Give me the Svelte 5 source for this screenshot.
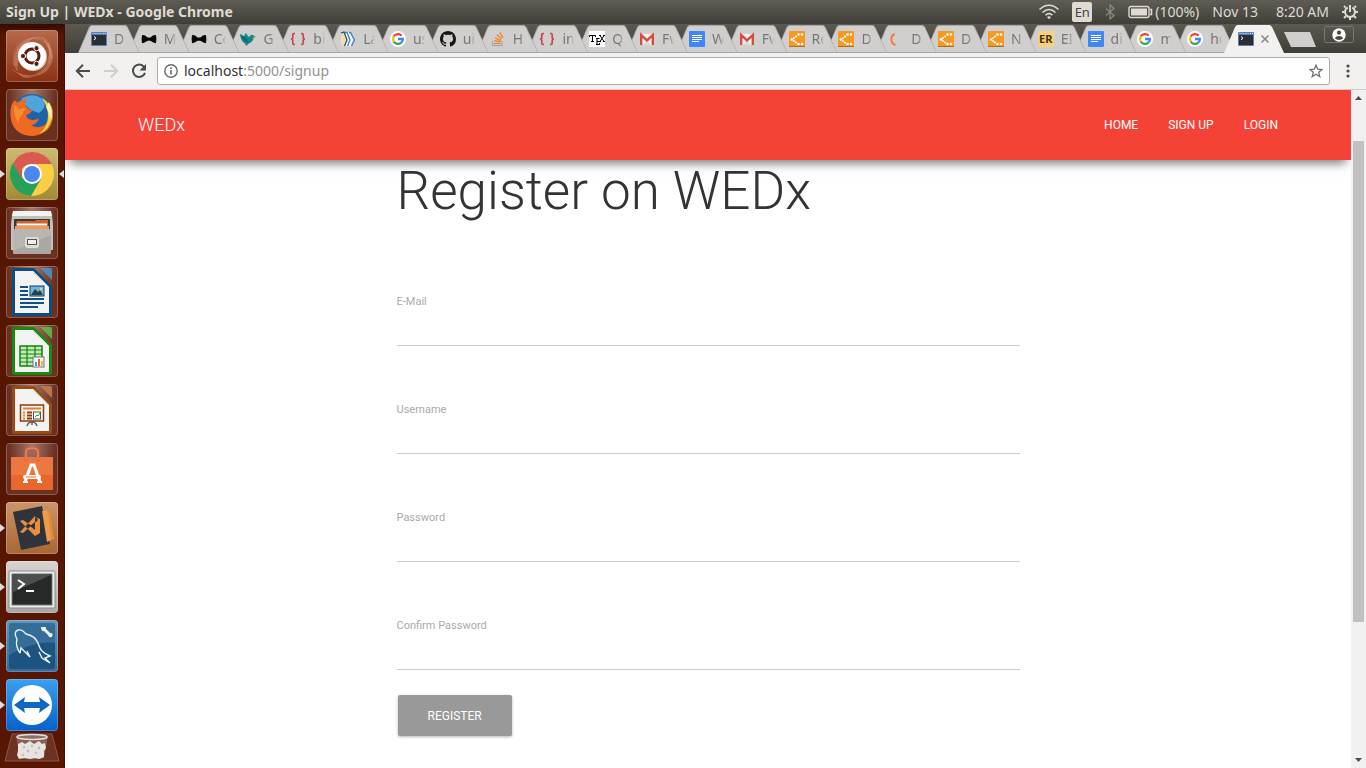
<script>
  const tabs = [
    { icon: 'term', label: 'D' },
    { icon: 'bow', label: 'M' },
    { icon: 'bow', label: 'Co' },
    { icon: 'bird', label: 'Go' },
    { icon: 'braces', label: 'bi' },
    { icon: 'books', label: 'La' },
    { icon: 'google', label: 'us' },
    { icon: 'github', label: 'ui' },
    { icon: 'stack', label: 'H' },
    { icon: 'braces', label: 'in' },
    { icon: 'tex', label: 'Q' },
    { icon: 'gmail', label: 'Fw' },
    { icon: 'docs', label: 'W' },
    { icon: 'gmail', label: 'Fw' },
    { icon: 'graph', label: 'Re' },
    { icon: 'graph', label: 'D' },
    { icon: 'spinner', label: 'D' },
    { icon: 'graph', label: 'D' },
    { icon: 'graph', label: 'N' },
    { icon: 'er', label: 'EI' },
    { icon: 'docs', label: 'di' },
    { icon: 'google', label: 'm' },
    { icon: 'google', label: 'ho' }
  ];

  const apps = [
    { id: 'ubuntu', name: 'Search your computer' },
    { id: 'firefox', name: 'Firefox' },
    { id: 'chrome', name: 'Google Chrome', running: true, focused: true },
    { id: 'files', name: 'Files' },
    { id: 'writer', name: 'LibreOffice Writer' },
    { id: 'calc', name: 'LibreOffice Calc' },
    { id: 'impress', name: 'LibreOffice Impress' },
    { id: 'software', name: 'Ubuntu Software' },
    { id: 'code', name: 'Visual Studio Code', running: true },
    { id: 'terminal', name: 'Terminal', running: true },
    { id: 'mysql', name: 'MySQL Workbench', running: true },
    { id: 'teamviewer', name: 'TeamViewer', running: true }
  ];

  const fields = [
    { id: 'email', label: 'E-Mail', type: 'email' },
    { id: 'username', label: 'Username', type: 'text' },
    { id: 'password', label: 'Password', type: 'password' },
    { id: 'confirm', label: 'Confirm Password', type: 'password' }
  ];
</script>

{#snippet favicon(name)}
  <svg class="fav" viewBox="0 0 16 16" aria-hidden="true">
    {#if name === 'term'}
      <rect x="0" y="1" width="16" height="14" rx="1" fill="#5b7fb5" />
      <rect x="1" y="4" width="14" height="10" fill="#2b2f33" />
      <path d="M1 2.5h10" stroke="#86a9dd" />
      <path d="M12 2.5h3" stroke="#dfe9f7" stroke-dasharray="1 1" />
      <path d="M3 5.5l2 1.7-2 1.7" fill="none" stroke="#fff" />
    {:else if name === 'bow'}
      <path d="M1 4.2Q3.5 3.6 6.6 6.5h2.8Q12.5 3.6 15 4.2q.8 3.8 0 8Q12.500 12 9.400 9.800H6.600Q3.500 12 1 12.200q-.8-4 0-8z" fill="#080808" />
    {:else if name === 'bird'}
      <path d="M0 3l4 2.500L5.500 2 9 6l2-2q2-1 3 1l2 .8-2.500 1Q13 11 9 12.500L6 15l-1-2.500Q1 11 0 3z" fill="#16878a" />
      <path d="M0 3l5 3 4 4-2 2-4-3z" fill="#0b6c78" />
      <path d="M13.500 5.200l2.500.8-2.500.8z" fill="#d7a13c" />
    {:else if name === 'braces'}
      <path d="M5 2.500H4Q2.800 2.500 2.800 4v2.200Q2.800 8 1 8q1.800 0 1.800 1.800V12q0 1.500 1.200 1.500h1M11 2.500h1q1.200 0 1.200 1.500v2.200Q13.200 8 15 8q-1.800 0-1.800 1.800V12q0 1.500-1.200 1.500h-1" fill="none" stroke="#c9464e" stroke-width="1.700" />
    {:else if name === 'books'}
      <path d="M1 2.500l4 1.500 1 6-2 5-3-1.500z" fill="#f1dfae" />
      <path d="M5 1.500l3.500 7L6 15M8 1.500l3.500 7L9 15" fill="none" stroke="#f4f8fc" stroke-width="3" />
      <path d="M1 2l3-1 3 8-2.500 6" fill="none" stroke="#24466f" stroke-width="1.200" />
      <path d="M5 1.500h2l3 7.500-2.500 6M9 1.500h1.500l4 7.500-3 6" fill="none" stroke="#3c82cc" stroke-width="1.300" />
    {:else if name === 'google'}
      <circle cx="8" cy="8" r="8" fill="#fff" />
      <g fill="none" stroke-width="2.300">
        <path d="M3.700 5.500A5 5 0 0 1 11.600 4.600" stroke="#ea4335" />
        <path d="M3.700 5.500a5 5 0 0 0 0 5" stroke="#fbbc05" />
        <path d="M3.700 10.500A5 5 0 0 0 11.300 11.700" stroke="#34a853" />
        <path d="M11.300 11.700Q13.200 10 12.900 8H8" stroke="#4285f4" />
      </g>
    {:else if name === 'github'}
      <path d="M8 0C3.580 0 0 3.580 0 8c0 3.540 2.290 6.530 5.470 7.590.4.070.55-.17.55-.38 0-.19-.01-.82-.01-1.490-2.010.37-2.530-.49-2.690-.94-.09-.23-.48-.94-.82-1.130-.28-.15-.68-.52-.01-.53.63-.01 1.080.58 1.230.82.720 1.210 1.870.87 2.330.66.070-.52.280-.87.510-1.070-1.780-.2-3.640-.89-3.640-3.950 0-.87.310-1.590.820-2.150-.08-.2-.36-1.020.080-2.120 0 0 .670-.21 2.200.82.640-.18 1.320-.27 2-.27s1.360.090 2 .27c1.530-1.040 2.200-.82 2.200-.82.440 1.100.160 1.920.080 2.120.510.56.820 1.270.820 2.150 0 3.070-1.870 3.750-3.650 3.950.290.25.540.73.540 1.480 0 1.070-.01 1.930-.01 2.200 0 .21.150.46.550.38A8.010 8.010 0 0 0 16 8c0-4.420-3.580-8-8-8z" fill="#171515" />
    {:else if name === 'stack'}
      <path d="M2.500 10v4.500h9.500V10" fill="none" stroke="#a7aaad" stroke-width="1.300" />
      <path d="M4 12.300h6.500M4.200 9.700l6.400 1M5 6.800l6 2.500M6.800 3.800l5 4M9.800 1.300l3.400 5.300" stroke="#f08024" stroke-width="1.300" />
    {:else if name === 'tex'}
      <rect width="16" height="16" fill="#fff" />
      <g fill="none" stroke="#000"><path d="M.5 6V4.500h6V6M3.500 4.500v6M2 10.500h3" /><path d="M7 7.500h3.500M8 7.500v6M7 13.500h3.500V12M8 10.500h2" /><path d="M10 4.500h2M14 4.500h2M11 4.500l4 6M15 4.500l-4 6M10 10.500h2M14 10.500h2" /></g>
    {:else if name === 'gmail'}
      <path d="M1 3h14v11H1z" fill="#f4f2f1" />
      <path d="M4 14l4-5 4 5z" fill="#dcd9d7" />
      <path d="M2.200 14V4L8 9.300 13.800 4v10" fill="none" stroke="#d54b3d" stroke-width="2.400" />
    {:else if name === 'docs'}
      <rect width="16" height="16" rx="1" fill="#4285f4" />
      <path d="M3 4.500h10M3 6.500h10M3 8.500h10M3 10.500h7" stroke="#fff" />
    {:else if name === 'graph'}
      <rect width="16" height="16" rx="1" fill="#f9981e" />
      <path d="M0 15.500h16" stroke="#b06d1c" />
      <g fill="#fff"><circle cx="9.500" cy="3.500" r="1.300" /><circle cx="13" cy="3.500" r="1.300" /><circle cx="7" cy="5.500" r="1.100" /><circle cx="5" cy="7" r="1" /><circle cx="3" cy="8.500" r="1.300" /><circle cx="5" cy="10" r="1" /><circle cx="7" cy="11.500" r="1.100" /><circle cx="9.500" cy="13" r="1.300" /><circle cx="13" cy="13" r="1.300" /></g>
    {:else if name === 'spinner'}
      <path d="M6.500 3A6 6 0 0 0 7.500 14" fill="none" stroke="#f07746" stroke-width="2" />
    {:else if name === 'er'}
      <rect width="16" height="16" fill="#f5d27b" />
      <text x="1" y="12" font-size="11" font-weight="700" font-family="Noto Sans, sans-serif" fill="#4a3218">ER</text>
    {/if}
  </svg>
{/snippet}

{#snippet sheet(edge, light)}
  <path d="M8 2h20l18 18v28q0 2-2 2H8q-2 0-2-2V4q0-2 2-2z" fill={edge} />
  <path d="M9 5h18l16 16v26H9z" fill="#f3f3f3" />
  <path d="M27 5v2l16 14z" fill="#dcdcdc" />
  <path d="M34 2h10q2 0 2 2v10z" fill={light} opacity=".85" />
{/snippet}

{#snippet appicon(id)}
  <svg viewBox="0 0 52 52" aria-hidden="true">
    {#if id === 'ubuntu'}
      <g fill="none" stroke="#e6a78a" stroke-opacity=".35"><path d="M8 36Q5 12 26 8q18 0 20 20M43 12q4 24-14 33Q15 48 6 39M11 20Q22 4 38 8q9 8 5 25" /></g>
      <path d="M8 34Q8 12 28 8 15 15 12 34t18 12Q11 48 8 34zM34 6q14 14 7 29-6 9-15 11 18 0 21-19Q47 14 34 6z" fill="#e8b7a0" opacity=".35" />
      <circle cx="27" cy="27" r="14" fill="#d9c4ba" />
      <circle cx="26" cy="26" r="14" fill="#fff" />
      <circle cx="26" cy="26" r="7" fill="none" stroke="#5a1c0c" stroke-width="3" />
      <g fill="#5a1c0c" stroke="#fff"><circle cx="17" cy="26" r="2.600" /><circle cx="30.500" cy="18.200" r="2.600" /><circle cx="30.500" cy="33.800" r="2.600" /></g>
    {:else if id === 'firefox'}
      <circle cx="26" cy="25" r="20" fill="#1d63a8" />
      <path d="M15 10q12-8 23 1 3 8-5 13-11-2-18-14z" fill="#4ea4dc" />
      <path d="M7 13q3-3 4 1 3-3 10-5-3 5-1 8 2 4 6 4-1 4-6 5 1 5 7 5 3 0 6-2-2 7-8 7 8 5 15-1 6-7 4-20 4 5 3 13-2 17-20 19Q9 47 5 31 3 20 7 13z" fill="#ed6a20" />
      <path d="M36 9q11 6 10 19-2 13-13 17 9-7 9-18 0-9-6-18z" fill="#fbd233" />
      <path d="M8 16q4 1 5 5 4-3 7-1-3 1-3 5-5 3-4 10-6-8-5-19z" fill="#f58d34" />
      <path d="M43 13q5 9 2 19-2-9-5-14z" fill="#fff3a6" />
    {:else if id === 'chrome'}
      <circle cx="26" cy="26" r="22" fill="#fbcf44" />
      <path d="M6.900 15A22 22 0 0 0 25 48L35 31 26 26 17 30z" fill="#26a05a" />
      <path d="M26 4A22 22 0 0 0 7 15l9 16V21q3-5 10-5h20A22 22 0 0 0 26 4z" fill="#d95a50" />
      <circle cx="26" cy="26" r="10" fill="#fff" /><circle cx="26" cy="26" r="8" fill="#4b87ef" />
    {:else if id === 'files'}
      <path d="M8 4h36q2 0 3 14v25H5V18Q6 4 8 4z" fill="#c3c1bd" />
      <path d="M7 4h38l1 5H6z" fill="#f3f2f0" />
      <path d="M8 12h36v11H8z" fill="#3c3833" />
      <path d="M10 16l1-2h18l1-1h12v10H10z" fill="#c8642d" />
      <path d="M11 17.500h30" stroke="#fff" stroke-width="2" /><path d="M9 19h34v3H9z" fill="#f29a55" />
      <path d="M7 22h38v24q0 1-1 1H8q-1 0-1-1z" fill="#aaa8a5" /><path d="M7 22h38v6L7 44z" fill="#c5c3c0" opacity=".5" />
      <rect x="19" y="30" width="14" height="11" rx="3" fill="#ddd" /><rect x="21.500" y="32.500" width="9" height="5" fill="#eee" stroke="#555" />
    {:else if id === 'writer'}
      {@render sheet('#0b4d82', '#4696cb')}
      <path d="M14 21h8M14 25h8M14 29h8M14 33h24M14 37h24M14 41h18" stroke="#0d5287" stroke-width="2" />
      <rect x="24" y="20" width="14" height="10" fill="#6db6e4" stroke="#0d4168" /><path d="M25 29l4-6 3 3 2-2 3 5z" fill="#2d3d40" /><circle cx="35" cy="23" r="1.200" fill="#fbd94b" />
    {:else if id === 'calc'}
      {@render sheet('#188a0c', '#5cc044')}
      <path d="M14 21h22v20H14z" fill="#c4ecb9" stroke="#13800a" stroke-width="1.500" /><path d="M14 25h22M14 29h22M14 33h22M14 37h22M21 21v20M29 21v20" stroke="#13800a" stroke-width="1.200" />
      <rect x="27" y="32" width="11" height="10" fill="#f5f5f5" stroke="#777" /><path d="M30 41v-4" stroke="#34a0df" stroke-width="2" /><path d="M33 41v-7" stroke="#e5652d" stroke-width="2" /><path d="M36 41v-5" stroke="#f1bd35" stroke-width="2" />
    {:else if id === 'impress'}
      {@render sheet('#9b4a16', '#c87d4d')}
      <path d="M26 37v4M21 42q1-4 5-4t5 4" fill="none" stroke="#666" stroke-width="1.500" />
      <rect x="14.500" y="21" width="23" height="16" fill="#fff5ea" stroke="#8c3d0e" stroke-width="1.500" /><path d="M17 24.500h18" stroke="#e27b3e" stroke-width="2" />
      <path d="M17 28.500h2M17 31.500h2M17 34.500h2" stroke="#e27b3e" stroke-width="2" /><path d="M21 28.500h5M21 31.500h5M21 34.500h5" stroke="#8c3d0e" stroke-width="2" />
      <rect x="27.500" y="28" width="7" height="7" fill="#fff" stroke="#555" /><path d="M29 33l2-2 1 1 2-3" fill="none" stroke="#35a12b" />
    {:else if id === 'software'}
      <path d="M5 14h42v33H5z" fill="#e9662c" /><path d="M5 14h42v18H5z" fill="#f18a52" opacity=".5" />
      <path d="M20 18V9q0-4 6-4t6 4v9" fill="none" stroke="#d8623a" stroke-width="3" /><path d="M20 17V9q0-4 6-4t6 4v8" fill="none" stroke="#f0936a" />
      <path d="M19 39l6-17h3l6 17" fill="none" stroke="#fff" stroke-width="3" /><path d="M17 39h5M31 39h5" stroke="#fff" stroke-width="2" /><rect x="17" y="32" width="18" height="4" rx="2" fill="#fff" /><path d="M20 34h10" stroke="#e9662c" />
    {:else if id === 'code'}
      <path d="M35 8l9 1 4 28-7 3z" fill="#e7893b" /><path d="M35 8l6 1 3 30-5 1z" fill="#f5a554" /><path d="M7 10l29-6 8 38-29 6z" fill="#30343a" /><path d="M36 9l6 1 3 28-4 2z" fill="#ee9a4b" />
      <path d="M14 19l3-1 12 8V15l5 2v14l-5 3zM14 30l3 1 15-13-3-4z" fill="#e98e3e" /><path d="M29 20v8l-5-4z" fill="#30343a" />
    {:else if id === 'terminal'}
      <rect x="3" y="10" width="46" height="37" rx="1" fill="#eee" stroke="#8b8885" /><rect x="6" y="13" width="40" height="31" fill="#252927" stroke="#777" />
      <path d="M7 14h38L7 31z" fill="#4b504d" /><path d="M12 19l6 4-6 5M20 30h8" fill="none" stroke="#fff" stroke-width="2" />
    {:else if id === 'mysql'}
      <rect x="3" y="3" width="46" height="46" rx="3" fill="#1d5380" /><path d="M3 3h46v20Q30 20 3 35z" fill="#457fa8" opacity=".6" />
      <path d="M14 33Q9 26 11 19q-4-7 1-9 4-1 8 4 9 2 12 9 2 6 4 8 3 3 8 5l-5 2 5 5-8-5q-2-4-3-6M14 33l1-5 4 4 5 5-3-6" fill="none" stroke="#e7f0f5" stroke-width="1.400" />
      <path d="M37 8l7 7" stroke="#e7f0f5" stroke-width="3" /><path d="M35 7q0 5 4 4l1-4M43 17q5 1 3-4l-4 1" fill="#e7f0f5" />
    {:else if id === 'teamviewer'}
      <circle cx="26" cy="26" r="20" fill="#fff" /><path d="M8 26l11-8-1 5h16l-1-5 11 8-11 8 1-5H18l1 5z" fill="#1167c2" />
    {/if}
  </svg>
{/snippet}

<div class="desktop">
  <header class="panel">
    <h2>Sign Up | WEDx - Google Chrome</h2>
    <div class="status">
      <svg width="20" height="16" viewBox="0 0 20 16" fill="none" stroke="#dfdbd2" stroke-width="1.500" aria-hidden="true"><path d="M0.500 5.500Q10-3 19.500 5.500M3.500 8.500Q10 2.500 16.500 8.500M6.500 11.300Q10 8 13.500 11.300" /><path d="M8 13q2-1.500 4 0l-2 2.300z" fill="#dfdbd2" stroke="none" /></svg>
      <span class="lang">En</span>
      <svg width="10" height="16" viewBox="0 0 10 16" fill="none" stroke="#8c8a83" stroke-width="1.200" aria-hidden="true"><path d="M1 4.500l8 7-4 3.500V1l4 3.500-8 7" /></svg>
      <div class="battery">
        <svg width="25" height="14" viewBox="0 0 25 14" aria-hidden="true"><rect x="1" y="1.500" width="20" height="11" rx="2" fill="none" stroke="#dfdbd2" stroke-width="1.400" /><rect x="3" y="3.500" width="16" height="7" fill="#dfdbd2" /><path d="M22 4.500h1.500v5H22" fill="none" stroke="#dfdbd2" stroke-width="1.500" /></svg>
        <span>(100%)</span>
      </div>
      <span>Nov 13</span>
      <time>8:20 AM</time>
      <svg width="16" height="16" viewBox="0 0 16 16" fill="none" stroke="#dfdbd2" aria-hidden="true"><path d="M5.700 3.500a5 5 0 1 0 4.600 0" stroke-width="2" /><path d="M8 1v7" stroke-width="2" /><path d="M3.500 3.500L2 2M12.500 3.500L14 2M2.500 8H0M13.500 8H16M4 12l-2 2M12 12l2 2M8 13v3" stroke-width="2" /></svg>
    </div>
  </header>

  <div class="body">
    <nav class="launcher" aria-label="Launcher">
      {#each apps as app}
        <button class="tile {app.id}" class:running={app.running} class:focused={app.focused} aria-label={app.name}>{@render appicon(app.id)}</button>
      {/each}
      <button class="trash" aria-label="Trash">
        <svg viewBox="0 0 56 30" aria-hidden="true">
          <path d="M8 1h40l7 27H1z" fill="#6d3221" stroke="#8f5541" />
          <path d="M12 3h32l-4 22q-12 3-24 0z" fill="#8d6c60" opacity=".8" />
          <ellipse cx="28" cy="4" rx="15" ry="2.500" fill="#8b7065" stroke="#e4dedb" stroke-width="1.500" />
          <path d="M14 11l4-2 3 2 5-3 4 3 5-3 3 3 3-1 1 5-2 3v6l-5 2-4-1-5 1-5-1-6 1-2-4 1-4z" fill="#e6e3e1" />
          <g fill="#c2bdb9"><circle cx="20" cy="14" r="1.200" /><circle cx="28" cy="13" r="1.200" /><circle cx="35" cy="15" r="1.400" /><circle cx="24" cy="18" r="1.400" /><circle cx="32" cy="20" r="1.200" /><circle cx="19" cy="22" r="1.200" /></g>
        </svg>
      </button>
    </nav>

    <div class="browser">
      <div class="tabstrip">
        <div class="tabs">
          {#each tabs as tab, i}
            <button class="tab" style="z-index: {tabs.length - i}">
              {@render favicon(tab.icon)}<span class="tabtext">{tab.label}</span>
            </button>
          {/each}
          <div class="tab active">
            {@render favicon('term')}
            <button class="close" aria-label="Close tab"><svg width="8" height="8" viewBox="0 0 8 8" aria-hidden="true"><path d="M.5.5l7 7M7.500.5l-7 7" stroke="#858585" stroke-width="1.500" /></svg></button>
          </div>
        </div>
        <button class="newtab" aria-label="New tab"></button>
        <button class="profile" aria-label="Profile"><svg width="14" height="14" viewBox="0 0 14 14" aria-hidden="true"><circle cx="7" cy="7" r="6.700" fill="#fff" /><circle cx="7" cy="4.700" r="2.100" fill="#4a4943" /><path d="M2.800 10.300Q4 8 7 8t4.200 2.300Q9.500 12 7 12t-4.200-1.700z" fill="#4a4943" /></svg></button>
      </div>

      <div class="toolbar">
        <button aria-label="Back"><svg width="16" height="16" viewBox="0 0 16 16" fill="none" stroke="#4b4b4b" stroke-width="2" aria-hidden="true"><path d="M15 8H2.500M8 1.800L1.800 8 8 14.200" /></svg></button>
        <button aria-label="Forward" disabled><svg width="16" height="16" viewBox="0 0 16 16" fill="none" stroke="#cecdcc" stroke-width="2" aria-hidden="true"><path d="M1 8h12.500M8 1.800L14.200 8 8 14.200" /></svg></button>
        <button aria-label="Reload"><svg width="16" height="16" viewBox="0 0 16 16" aria-hidden="true"><path d="M13 3.800A6.200 6.200 0 1 0 14 9.800" fill="none" stroke="#4b4b4b" stroke-width="2" /><path d="M15 1v6.500H8.500z" fill="#4b4b4b" /></svg></button>
        <div class="omnibox">
          <svg width="14" height="14" viewBox="0 0 14 14" aria-hidden="true"><circle cx="7" cy="7" r="6.200" fill="none" stroke="#6a6a6a" stroke-width="1.400" /><path d="M7 6v4.500M7 3.300v1.600" stroke="#6a6a6a" stroke-width="1.600" /></svg>
          <span class="url">localhost<span>:5000/signup</span></span>
          <button aria-label="Bookmark this page"><svg width="14" height="14" viewBox="0 0 14 14" aria-hidden="true"><path d="M7 1.200l1.700 4 4.300.3-3.300 2.800 1.100 4.300L7 10.300l-3.800 2.300 1.100-4.300L1 5.500l4.300-.3z" fill="none" stroke="#6f6f6f" stroke-width="1.300" /></svg></button>
        </div>
        <button class="menu" aria-label="Menu"><svg width="4" height="14" viewBox="0 0 4 14" fill="#4b4b4b" aria-hidden="true"><circle cx="2" cy="2" r="1.600" /><circle cx="2" cy="7" r="1.600" /><circle cx="2" cy="12" r="1.600" /></svg></button>
      </div>

      <div class="viewport">
        <div class="page">
          <nav class="navbar">
            <div class="container">
              <a class="brand" href="#home">WEDx</a>
              <div class="links">
                <a href="#home">HOME</a>
                <a href="#signup">SIGN UP</a>
                <a href="#login">LOGIN</a>
              </div>
            </div>
          </nav>
          <main>
            <h1>Register on WEDx</h1>
            <form>
              <div class="fields">
                {#each fields as field}
                  <div class="field">
                    <label for={field.id}>{field.label}</label>
                    <input id={field.id} type={field.type} />
                  </div>
                {/each}
              </div>
              <button class="register" type="button">REGISTER</button>
            </form>
          </main>
        </div>
        <div class="scrollbar" aria-hidden="true">
          <svg width="7" height="4" viewBox="0 0 7 4"><path d="M3.500 0L7 4H0z" fill="#4d4d4d" /></svg>
          <div class="track"><div class="thumb"></div></div>
          <svg width="7" height="4" viewBox="0 0 7 4"><path d="M0 0h7L3.500 4z" fill="#4d4d4d" /></svg>
        </div>
      </div>
    </div>
  </div>
</div>

<style>
  :global(body) { margin: 0; }
  * { box-sizing: border-box; }
  button { border: 0; padding: 0; background: none; font: inherit; color: inherit; }
  svg { display: block; flex: none; }

  .desktop {
    display: flex;
    flex-direction: column;
    height: 100vh;
    overflow: hidden;
    font-family: "Noto Sans", sans-serif;
    font-size: 14px;
  }

  .panel {
    display: flex;
    align-items: center;
    justify-content: space-between;
    flex: none;
    height: 24px;
    padding: 0 8px 0 6px;
    background: linear-gradient(#5f5d53, #3f3e39);
    color: #dfdbd2;
    line-height: 24px;
  }
  .panel h2 { margin: 0; font-size: 14px; font-weight: 700; }
  .status { display: flex; align-items: center; gap: 13px; }
  .lang {
    width: 20px;
    height: 20px;
    border-radius: 2px;
    background: #dfdbd2;
    color: #45443f;
    font-size: 13px;
    line-height: 20px;
    text-align: center;
  }
  .battery { display: flex; align-items: center; gap: 2px; }
  time { margin-left: 5px; }

  .body { display: flex; flex: 1; min-height: 0; }

  .launcher {
    display: flex;
    flex-direction: column;
    align-items: center;
    gap: 7px;
    flex: none;
    width: 65px;
    padding: 6px 1px 0 0;
    background: linear-gradient(#350c02, #561602 12px);
    border-right: 1px solid #3f1002;
  }
  .tile {
    position: relative;
    flex: none;
    width: 52px;
    height: 52px;
    border-radius: 4px;
    background: radial-gradient(ellipse at 50% 0, #a3796a, #6a3022 65%);
    box-shadow: inset 0 0 0 1px rgba(255, 255, 255, .22);
  }
  .ubuntu { background: linear-gradient(#b66a4c, #8c3213); }
  .chrome { background: linear-gradient(#cdbb6e, #a18a32); }
  .code { background: linear-gradient(#cc9566, #a86636); }
  .terminal { background: linear-gradient(#d8d4d1, #aaa6a3); }
  .mysql { background: linear-gradient(#6595bb, #376a9c); }
  .teamviewer { background: linear-gradient(#39a0ef, #0760cc); }
  .running::before, .focused::after {
    content: "";
    position: absolute;
    top: 22px;
    border: 4px solid transparent;
  }
  .running::before { left: -6px; border-left: 5px solid #dedbd9; border-right: 0; }
  .focused::after { right: -6px; border-right: 5px solid #dedbd9; border-left: 0; }
  .trash { width: 56px; height: 30px; margin-top: -5px; }

  .browser { display: flex; flex-direction: column; flex: 1; min-width: 0; }
  .tabstrip {
    display: flex;
    flex: none;
    height: 29px;
    padding: 0 12px 0 13px;
    background: linear-gradient(#5b5950, #3f3e39);
  }
  .tabs { display: flex; flex: 1; min-width: 0; padding-top: 1px; isolation: isolate; }
  .tab {
    position: relative;
    display: flex;
    align-items: center;
    flex: 1;
    min-width: 0;
    margin-right: -12px;
    padding-left: 13px;
    gap: 7px;
    color: #777;
  }
  .tab::before, .tab::after {
    content: "";
    position: absolute;
    inset: 0;
    z-index: -1;
    background: #a9a7a5;
    clip-path: polygon(0 100%, 11px 2px, 13px 0, calc(100% - 14px) 0, calc(100% - 12px) 2px, 100% 100%);
  }
  .tab::after {
    background: #d1cfcd;
    clip-path: polygon(1px calc(100% - 1px), 12px 2px, 14px 1px, calc(100% - 15px) 1px, calc(100% - 13px) 2px, calc(100% - 1px) calc(100% - 1px));
  }
  .tab.active { flex: 0 0 60px; margin-right: 0; padding-left: 14px; z-index: 30; }
  .tab.active::before, .tab.active::after { background: #f2f1f0; }
  .fav { width: 16px; height: 16px; }
  .tabtext {
    width: 12px;
    overflow: hidden;
    line-height: 20px;
    text-align: left;
    white-space: nowrap;
    mask-image: linear-gradient(90deg, #000 60%, transparent);
  }
  .newtab {
    width: 32px;
    height: 15px;
    margin-top: 8px;
    background: #d1cfcd;
    clip-path: polygon(0 0, 26px 0, 100% 100%, 7px 100%);
  }
  .profile {
    display: grid;
    place-items: center;
    width: 30px;
    height: 17px;
    margin: 2px 0 0 8px;
    border: 1px solid #77756e;
    border-radius: 2px;
  }

  .toolbar {
    display: flex;
    align-items: center;
    gap: 12px;
    flex: none;
    height: 37px;
    padding: 0 16px 0 10px;
    background: #f2f1f0;
    border-bottom: 1px solid #cfcdcb;
  }
  .omnibox {
    display: flex;
    align-items: center;
    gap: 6px;
    flex: 1;
    height: 28px;
    margin: 0 4px 0 -2px;
    padding: 0 6px;
    border: 1px solid #aeacaa;
    border-radius: 3px;
    background: #fff;
  }
  .url { flex: 1; padding-bottom: 2px; color: #333; }
  .url span { color: #929292; }

  .viewport { display: flex; flex: 1; min-height: 0; background: #fff; }
  .page { flex: 1; min-width: 0; overflow: hidden; font-family: Roboto, sans-serif; }
  .navbar {
    height: 70px;
    background: #f44336;
    box-shadow: 0 8px 10px -5px rgba(0, 0, 0, .55);
  }
  .container {
    display: flex;
    align-items: center;
    justify-content: space-between;
    max-width: 1140px;
    height: 100%;
    margin: 0 auto;
  }
  .container a { color: #fff; text-decoration: none; }
  .brand { padding-bottom: 2px; font-size: 18px; font-weight: 300; }
  .links { display: flex; gap: 30px; font-size: 12px; }

  main { width: 100%; max-width: 623px; margin: 0 auto; }
  h1 {
    margin: 0 0 73px;
    color: #333;
    font-size: 53px;
    font-weight: 300;
    line-height: 62px;
  }
  .fields { display: grid; gap: 57px; }
  .field { display: flex; flex-direction: column; }
  label { color: #aaa; font-size: 11px; line-height: 14px; }
  input {
    height: 37px;
    border: 0;
    border-bottom: 1px solid #ccc;
    padding: 0;
    background: transparent;
    outline: 0;
    font: 16px Roboto, sans-serif;
  }
  .register {
    height: 41px;
    margin: 25px 0 0 1px;
    padding: 0 30px;
    border-radius: 2px;
    background: #999;
    box-shadow: 0 1px 3px rgba(0, 0, 0, .3);
    color: #fff;
    font-size: 12px;
  }

  .scrollbar {
    display: flex;
    flex-direction: column;
    align-items: center;
    flex: none;
    width: 15px;
    padding: 6px 0;
    background: #f1f1f1;
  }
  .track { flex: 1; width: 11px; padding-top: 41px; }
  .thumb { height: 78%; background: #c1c1c1; }
</style>
